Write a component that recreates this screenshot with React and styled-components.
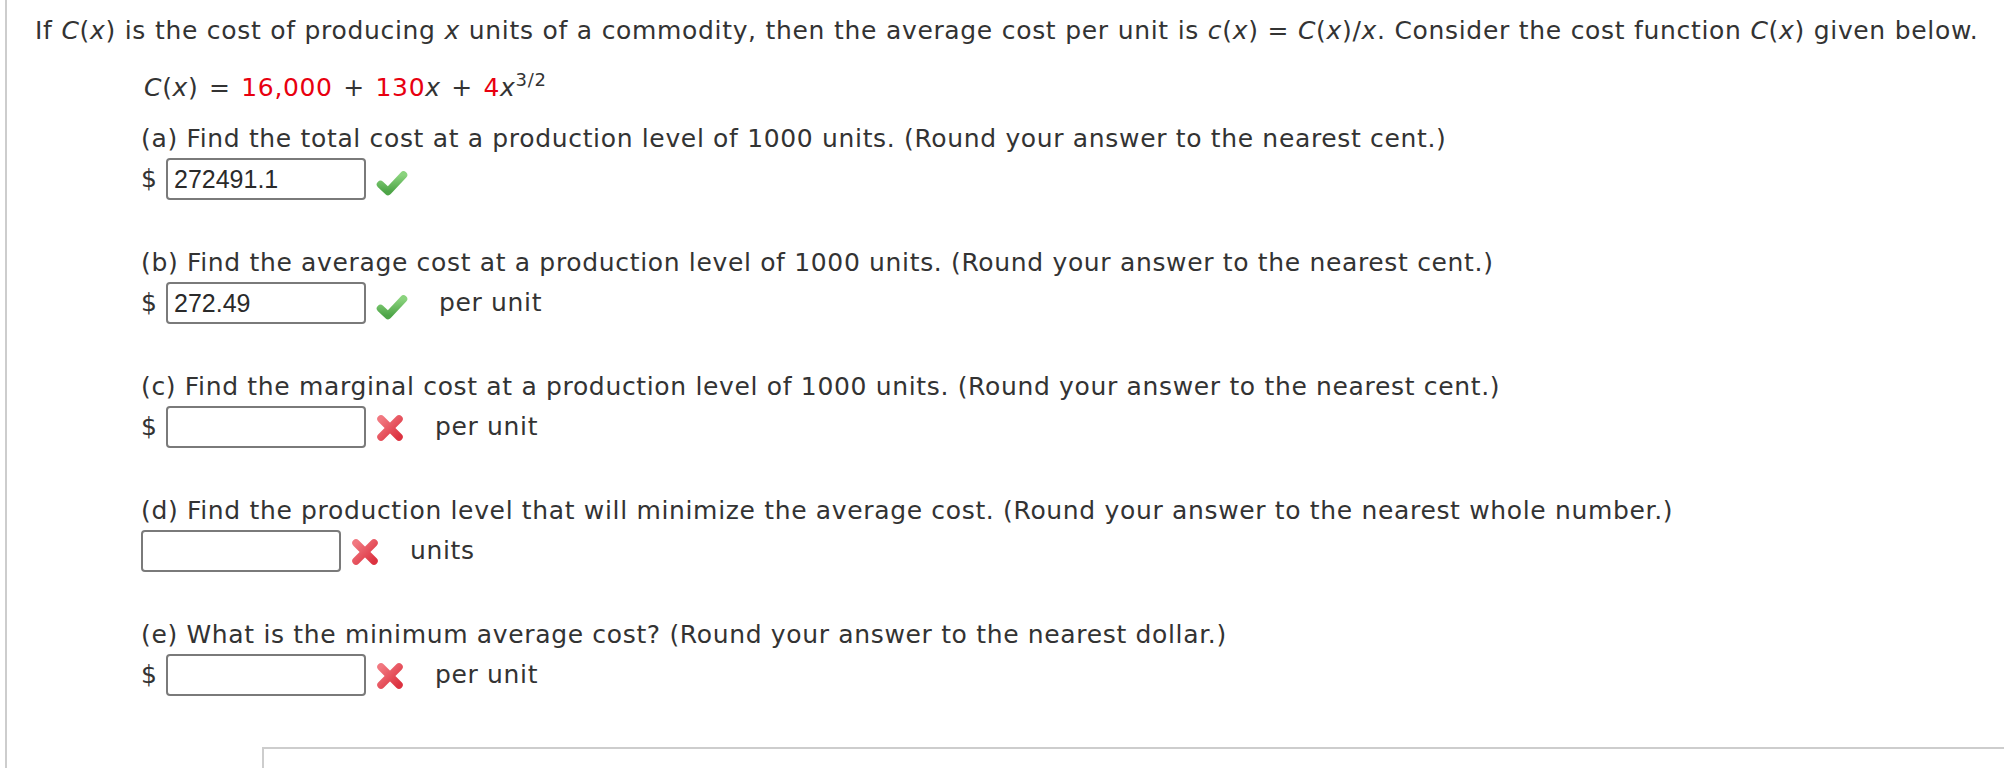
import React from 'react';
import styled, { createGlobalStyle } from 'styled-components';

const GlobalStyle = createGlobalStyle`
	html, body {
		margin: 0;
		padding: 0;
		background: #fff;
	}
`;

const Frame = styled.div`
	margin-left: 5px;
	border-left: 2px solid #cdcdcd;
	height: 768px;
	overflow: hidden;
	box-sizing: border-box;
	padding: 16px 0 0 28px;
	font-family: "DejaVu Sans", Verdana, sans-serif;
	font-size: 25px;
	letter-spacing: 0.66px;
	line-height: 30px;
	color: #333;
	display: flex;
	flex-direction: column;
`;

const Intro = styled.p`
	margin: 0;
	white-space: nowrap;
	word-spacing: 0.3px;
`;

const Formula = styled.p`
	margin: 25px 0 0 109px;
	white-space: nowrap;
	word-spacing: 2px;
`;

const Red = styled.span`
	color: #e8000f;
`;

const Var = styled.i`
	font-style: italic;
`;

const Sup = styled.span`
	font-size: 18px;
	line-height: 1;
	vertical-align: 10px;
`;

const Question = styled.div`
	margin: ${props => (props.first ? '21px' : '48px')} 0 0 106px;
`;

const QuestionText = styled.p`
	margin: 0;
	white-space: nowrap;
`;

const AnswerRow = styled.div`
	margin-top: 4px;
	height: 42px;
	display: flex;
	align-items: center;
`;

const Dollar = styled.span`
	width: 25px;
	flex: none;
`;

const AnswerInput = styled.input`
	box-sizing: border-box;
	width: 200px;
	height: 42px;
	border: 2px solid #7a7a7a;
	border-radius: 4px;
	padding: 0 6px;
	margin: 0;
	font-family: "Liberation Sans", Arial, sans-serif;
	font-size: 25px;
	letter-spacing: 0;
	color: #2a2a2a;
	background: #fff;
	outline: none;
`;

const Mark = styled.svg`
	flex: none;
	margin-left: 10px;
	margin-top: ${props => props.offset || 0}px;
`;

const Unit = styled.span`
	margin-left: 31px;
`;

const NextBox = styled.div`
	margin: 51px 0 0 227px;
	height: 40px;
	border-top: 2px solid #cdcdcd;
	border-left: 2px solid #cdcdcd;
`;

const CheckIcon = () => (
	<Mark width="32" height="26" viewBox="0 0 32 26" offset={8}>
		<defs>
			<linearGradient id="chk" x1="0" y1="0" x2="0" y2="1">
				<stop offset="0" stopColor="#8ad37d" />
				<stop offset="1" stopColor="#4ea548" />
			</linearGradient>
		</defs>
		<polyline points="4.5,14.5 12,21.5 27.5,5" fill="none" stroke="url(#chk)" strokeWidth="7.5" strokeLinecap="round" strokeLinejoin="round" />
	</Mark>
);

const CrossIcon = () => (
	<Mark width="28" height="28" viewBox="0 0 28 28" offset={1}>
		<defs>
			<linearGradient id="crs" x1="0" y1="0" x2="1" y2="1">
				<stop offset="0" stopColor="#f17880" />
				<stop offset="1" stopColor="#dc3240" />
			</linearGradient>
		</defs>
		<g stroke="url(#crs)" strokeWidth="7.5" strokeLinecap="round">
			<line x1="5" y1="5" x2="23" y2="23" />
			<line x1="23" y1="5" x2="5" y2="23" />
		</g>
	</Mark>
);

const questions = [
	{
		label: '(a) Find the total cost at a production level of 1000 units. (Round your answer to the nearest cent.)',
		dollar: true,
		value: '272491.1',
		correct: true,
		unit: '',
	},
	{
		label: '(b) Find the average cost at a production level of 1000 units. (Round your answer to the nearest cent.)',
		dollar: true,
		value: '272.49',
		correct: true,
		unit: 'per unit',
	},
	{
		label: '(c) Find the marginal cost at a production level of 1000 units. (Round your answer to the nearest cent.)',
		dollar: true,
		value: '',
		correct: false,
		unit: 'per unit',
	},
	{
		label: '(d) Find the production level that will minimize the average cost. (Round your answer to the nearest whole number.)',
		dollar: false,
		value: '',
		correct: false,
		unit: 'units',
	},
	{
		label: '(e) What is the minimum average cost? (Round your answer to the nearest dollar.)',
		dollar: true,
		value: '',
		correct: false,
		unit: 'per unit',
	},
];

const App = () => (
	<>
		<GlobalStyle />
		<Frame>
			<Intro>
				If <Var>C</Var>(<Var>x</Var>) is the cost of producing <Var>x</Var> units of a commodity, then the average cost per unit is <Var>c</Var>(<Var>x</Var>) = <Var>C</Var>(<Var>x</Var>)/<Var>x</Var>. Consider the cost function <Var>C</Var>(<Var>x</Var>) given below.
			</Intro>
			<Formula>
				<Var>C</Var>(<Var>x</Var>) = <Red>16,000</Red> + <Red>130</Red><Var>x</Var> + <Red>4</Red><Var>x</Var><Sup>3/2</Sup>
			</Formula>
			{questions.map((q, index) => (
				<Question key={`q-${index}`} first={index === 0}>
					<QuestionText>{q.label}</QuestionText>
					<AnswerRow>
						{q.dollar && <Dollar>$</Dollar>}
						<AnswerInput type="text" defaultValue={q.value} />
						{q.correct ? <CheckIcon /> : <CrossIcon />}
						{q.unit && <Unit>{q.unit}</Unit>}
					</AnswerRow>
				</Question>
			))}
			<NextBox />
		</Frame>
	</>
);

export default App;
